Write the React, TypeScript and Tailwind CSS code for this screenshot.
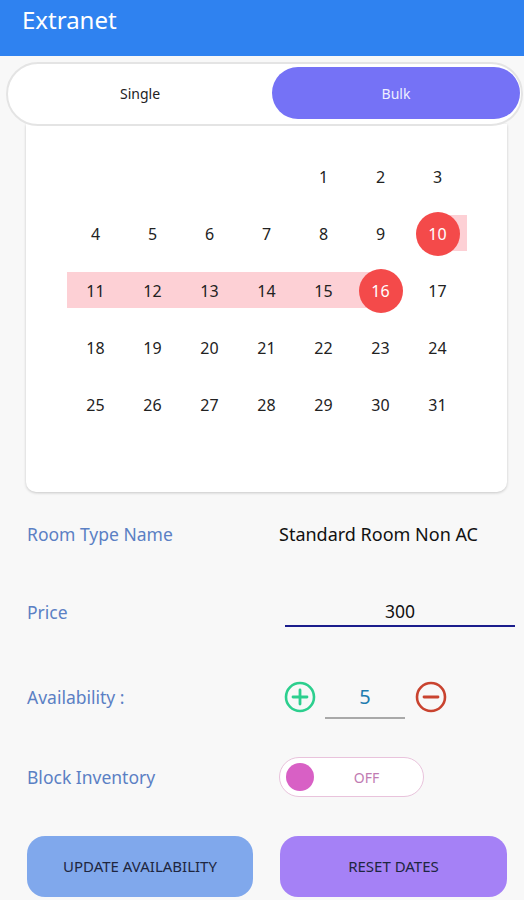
import React from "react";

const font = { fontFamily: '"Noto Sans", "Open Sans", Arial, sans-serif' };

function Day({ n }: { n: number | null }) {
  if (n === null) return <div className="h-[57px]" />;
  const selected = n === 10 || n === 16;
  const fullBand = n >= 11 && n <= 15;
  return (
    <div className="relative h-[57px] flex items-center justify-center">
      {fullBand && <div className="absolute left-0 right-0 top-[10px] h-[36px] bg-[#fdd0d5]" />}
      {n === 10 && <div className="absolute left-1/2 right-[-1px] top-[10px] h-[36px] bg-[#fdd0d5]" />}
      {n === 16 && <div className="absolute left-0 right-1/2 top-[10px] h-[36px] bg-[#fdd0d5]" />}
      {selected && <div className="absolute w-[44px] h-[44px] rounded-full bg-[#f44a4a] left-1/2 top-1/2 -translate-x-1/2 -translate-y-1/2" />}
      <span className={`relative text-[16px] ${selected ? "text-white" : "text-[#222]"}`}>{n}</span>
    </div>
  );
}

export default function App() {
  const days: (number | null)[] = [null, null, null, null];
  for (let i = 1; i <= 31; i++) days.push(i);
  return (
    <div className="w-[524px] h-[900px] bg-[#f8f8f8] overflow-hidden" style={font}>
      <div className="h-[56px] bg-[#2f82f0] pl-[22px] pt-[5px]">
        <div className="text-white text-[24px] leading-[30px]">Extranet</div>
      </div>
      <div className="relative z-10 mt-[6px] ml-[6px] mr-[1px] h-[64px] rounded-full border-2 border-[#e4e4e4] bg-white flex items-stretch pt-[3px] pb-[5px] pr-[1px]">
        <div className="flex-1 flex items-center justify-center text-[14px] text-[#222]">Single</div>
        <div className="w-[248px] rounded-full bg-[#7572f6] flex items-center justify-center text-[14px] text-[#eeeeff]">Bulk</div>
      </div>
      <div className="ml-[26px] mr-[17px] -mt-[2px] bg-white rounded-b-[10px] shadow-[0_1px_3px_rgba(0,0,0,0.2)] pl-[41px] pr-[41px] pt-[24px] pb-[59px]">
        <div className="grid grid-cols-7">
          {days.map((d, i) => (
            <Day key={i} n={d} />
          ))}
        </div>
      </div>
      <div className="pl-[27px] pr-[9px]">
        <div className="h-[78px] mt-[3px] flex items-center">
          <div className="w-[252px] text-[17.5px] text-[#5b80c4]">Room Type Name</div>
          <div className="text-[18px] text-[#111] whitespace-nowrap">Standard Room Non AC</div>
        </div>
        <div className="h-[78px] flex items-center">
          <div className="w-[258px] text-[17.5px] text-[#5b80c4]">Price</div>
          <div className="w-[230px] h-[30px] border-b-2 border-[#1b1d8c] flex items-center justify-center text-[17.5px] text-[#111]">300</div>
        </div>
        <div className="h-[92px] flex items-center">
          <div className="w-[257px] text-[17.5px] text-[#5b80c4]">Availability :</div>
          <svg width="32" height="32" viewBox="0 0 32 32" className="shrink-0">
            <circle cx="16" cy="16" r="14" fill="none" stroke="#2ccf8e" strokeWidth="2.6" />
            <path d="M16 9v14M9 16h14" stroke="#2ccf8e" strokeWidth="2.8" strokeLinecap="round" />
          </svg>
          <div className="ml-[9px] w-[80px] h-[44px] border-b-2 border-[#a9a9a9] flex items-center justify-center text-[20px] text-[#1f7db0] pt-[2px]">5</div>
          <svg width="32" height="32" viewBox="0 0 32 32" className="shrink-0 ml-[10px]">
            <circle cx="16" cy="16" r="14" fill="none" stroke="#c9432f" strokeWidth="2.6" />
            <path d="M9 16h14" stroke="#c9432f" strokeWidth="2.8" strokeLinecap="round" />
          </svg>
        </div>
        <div className="h-[68px] flex items-center">
          <div className="w-[252px] text-[17.5px] text-[#5b80c4]">Block Inventory</div>
          <div className="relative w-[145px] h-[40px] rounded-full border border-[#e9c3dc] bg-white flex items-center">
            <div className="ml-[6px] w-[28px] h-[28px] rounded-full bg-[#d860c5]" />
            <div className="flex-1 text-center text-[14px] text-[#c17bb2] pr-[4px]">OFF</div>
          </div>
        </div>
        <div className="mt-[25px] flex gap-[27px]">
          <div className="w-[226px] h-[61px] rounded-[18px] bg-[#80a8ec] flex items-center justify-center text-[15px] text-[#1e2640]">UPDATE AVAILABILITY</div>
          <div className="w-[227px] h-[61px] rounded-[18px] bg-[#a581f6] flex items-center justify-center text-[15px] text-[#1e2640]">RESET DATES</div>
        </div>
      </div>
    </div>
  );
}
